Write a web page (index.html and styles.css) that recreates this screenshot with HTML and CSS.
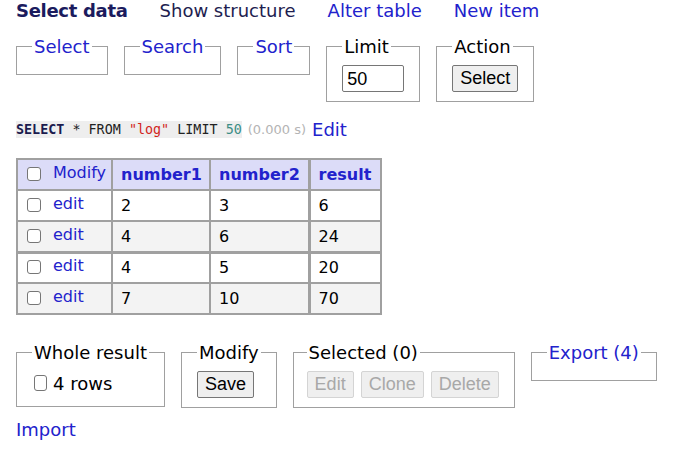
FILE: index.html
```html
<!DOCTYPE html>
<html>
<head>
<meta charset="utf-8">
<link rel="stylesheet" href="styles.css">
</head>
<body>
<nav class="tabs">
  <span class="current">Select data</span>
  <a class="dark" href="#">Show structure</a>
  <a href="#">Alter table</a>
  <a href="#">New item</a>
</nav>
<form class="controls">
  <fieldset class="fs empty"><legend><a href="#">Select</a></legend></fieldset>
  <fieldset class="fs empty"><legend><a href="#">Search</a></legend></fieldset>
  <fieldset class="fs empty"><legend><a href="#">Sort</a></legend></fieldset>
  <fieldset class="fs full"><legend>Limit</legend><input class="limit" type="text" value="50"></fieldset>
  <fieldset class="fs full"><legend>Action</legend><button type="button" class="btn">Select</button></fieldset>
</form>
<p class="sql"><code><span class="kw">SELECT</span> * FROM <span class="str">"log"</span> LIMIT <span class="num">50</span></code><span class="time">(0.000 s)</span><a href="#">Edit</a></p>
<table class="data">
  <colgroup><col class="w0"><col class="w1"><col class="w2"><col class="w3"></colgroup>
  <thead>
    <tr><th class="c0"><span class="chk"></span><a href="#" class="mod">Modify</a></th><th>number1</th><th>number2</th><th class="c3">result</th></tr>
  </thead>
  <tbody>
    <tr><td class="c0"><span class="chk"></span><a href="#">edit</a></td><td>2</td><td>3</td><td class="c3">6</td></tr>
    <tr class="odd sep"><td class="c0"><span class="chk"></span><a href="#">edit</a></td><td>4</td><td>6</td><td class="c3">24</td></tr>
    <tr><td class="c0"><span class="chk"></span><a href="#">edit</a></td><td>4</td><td>5</td><td class="c3">20</td></tr>
    <tr class="odd"><td class="c0"><span class="chk"></span><a href="#">edit</a></td><td>7</td><td>10</td><td class="c3">70</td></tr>
  </tbody>
</table>
<div class="bottom">
  <fieldset class="fs whole"><legend>Whole result</legend><label class="rows"><span class="chk small"></span>4 rows</label></fieldset>
  <fieldset class="fs full"><legend>Modify</legend><button type="button" class="btn">Save</button></fieldset>
  <fieldset class="fs full sel"><legend>Selected (0)</legend><div class="btns"><button type="button" class="btn dis">Edit</button><button type="button" class="btn dis">Clone</button><button type="button" class="btn dis">Delete</button></div></fieldset>
  <fieldset class="fs empty"><legend><a href="#">Export (4)</a></legend></fieldset>
</div>
<p class="import"><a href="#">Import</a></p>
</body>
</html>
```
FILE: styles.css
```css
* { box-sizing: border-box; }
body {
  margin: 0;
  padding: 0 16px;
  font-family: "DejaVu Sans", Verdana, sans-serif;
  font-size: 18px;
  line-height: 21px;
  color: #000;
  background: #fff;
}
a { color: #2222cc; text-decoration: none; }
.tabs {
  display: flex;
  gap: 32px;
  height: 21px;
  align-items: center;
}
.tabs .current { font-weight: bold; color: #1b1b5e; letter-spacing: -0.3px; }
.tabs a.dark { color: #1e1e50; }

.controls {
  display: flex;
  align-items: flex-start;
  gap: 16px;
  margin: 15px 0 0;
}
.fs {
  border: 1px solid #a0a0a0;
  margin: 0;
  padding: 0 15px 17px;
  min-width: 0;
}
.fs legend { padding: 0 2px; line-height: 21px; }
.fs.full { padding-bottom: 9px; }
.fs.full > :not(legend) { margin-top: 8px; }
.limit {
  display: block;
  width: 62px; height: 27px;
  border: 1px solid #767676;
  border-radius: 2px;
  font: 18px "Liberation Sans", Arial, sans-serif;
  padding: 1px 4px 0;
}
.btn {
  display: block;
  font: 18px "Liberation Sans", Arial, sans-serif;
  color: #000;
  background: #efefef;
  border: 1px solid #767676;
  border-radius: 2px;
  height: 27px;
  padding: 0 7px;
}
.btn.dis { color: #a8a8a8; border-color: #d4d4d4; background: #efefef; }

.sql { margin: 17px 0 0; height: 21px; display: flex; align-items: center; }
.sql code {
  font-family: "DejaVu Sans Mono", monospace;
  font-size: 13.4px;
  line-height: 17px;
  background: #eee;
  color: #222;
}
.sql .kw { font-weight: bold; color: #1b1b4e; }
.sql .str { color: #d2231a; }
.sql .num { color: #3c8d86; }
.sql .time { color: #b4b4b4; font-size: 13px; margin: 0 6px 0 6px; }

.data {
  border-collapse: collapse;
  table-layout: fixed;
  width: 364px;
  margin-top: 18px;
  font-size: 16px;
  line-height: 19px;
}
.w0 { width: 95px; } .w1 { width: 98px; } .w2 { width: 99px; } .w3 { width: 72px; }
.data th, .data td {
  border: 2px solid #a0a0a0;
  height: 31px;
  padding: 0 8px;
  text-align: left;
  font-weight: normal;
  white-space: nowrap;
}
.data thead tr { background: #dcdcf8; }
.data th { color: #2222cc; font-weight: bold; }
.data th.c0 { font-weight: normal; }
.data .c0 { padding-left: 9px; }
.data tr.odd { background: #f3f3f3; }
.data tr.sep td { border-bottom-width: 3px; }
.data .c3 { border-left-width: 3px; }
.chk {
  display: inline-block;
  width: 14px; height: 14px;
  border: 1px solid #767676;
  border-radius: 3px;
  background: #fff;
  vertical-align: -1px;
  margin-right: 12px;
}
.data .c0 a { position: relative; top: -2px; }

.bottom {
  display: flex;
  align-items: flex-start;
  gap: 16px;
  margin-top: 27px;
}
.whole { padding-bottom: 12px; }
.rows { display: flex; align-items: center; margin-top: 9px; margin-left: 2px; height: 22px; }
.chk.small { width: 13px; height: 16px; margin-right: 6px; vertical-align: 0; }
.sel { padding-left: 13px; }
.btns { display: flex; gap: 7px; }
.import { margin: 11px 0 0; }
```
